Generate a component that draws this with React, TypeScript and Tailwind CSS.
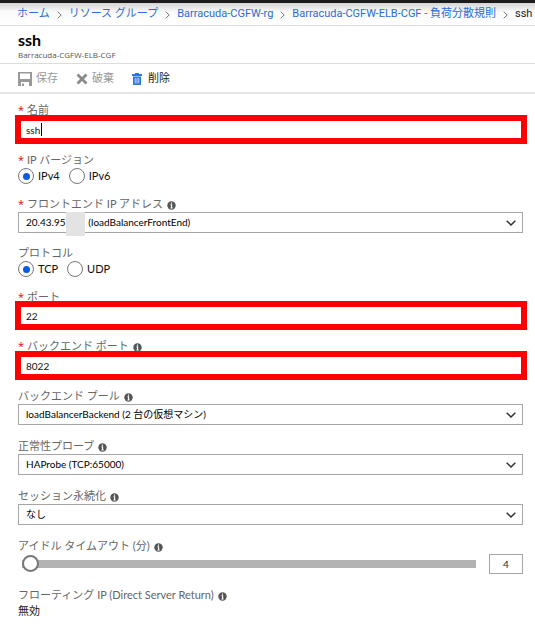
import { Fragment, useState } from "react";
import type { ReactNode } from "react";

const crumbs = ["ホーム", "リソース グループ", "Barracuda-CGFW-rg", "Barracuda-CGFW-ELB-CGF - 負荷分散規則"];

function InfoIcon() {
  return (
    <svg viewBox="0 0 9 9" className="mt-[3px] ml-1 size-[9px] shrink-0" aria-hidden="true">
      <circle cx="4.5" cy="4.5" r="4.2" fill="#555" />
      <path d="M4.5 1.4v1.300M3.500 3.900h1.100v2.900M3.400 7h2.300" stroke="#fff" strokeWidth="1.100" fill="none" />
    </svg>
  );
}

type LabelProps = { htmlFor?: string; id?: string; required?: boolean; info?: boolean; children: ReactNode };

function Label({ htmlFor, id, required, info, children }: LabelProps) {
  return (
    <label htmlFor={htmlFor} id={id} className="flex h-4 items-center leading-4 whitespace-nowrap text-[#666]">
      {required && <span className="w-[9px] shrink-0 font-['Open_Sans'] text-[#e3000f]">*</span>}
      {children}
      {info && <InfoIcon />}
    </label>
  );
}

function MarkedInput({ id, value }: { id: string; value: string }) {
  const [text, setText] = useState(value);
  return (
    <input
      id={id}
      value={text}
      onChange={(e) => setText(e.target.value)}
      className="block h-[29px] w-full border-[6px] border-[#ff0000] bg-white px-[5px] text-[10px] text-[#111] outline-none"
    />
  );
}

function Dropdown({ id, value }: { id: string; value: string }) {
  return (
    <div className="relative">
      <select id={id} className="block h-[21px] w-full appearance-none border border-[#a6a6a6] bg-white pr-6 pl-[7px] text-[10px] text-black outline-none">
        <option>{value}</option>
      </select>
      <svg viewBox="0 0 10 6" className="pointer-events-none absolute top-[8px] right-[7px] h-[6px] w-[10px]" aria-hidden="true">
        <path d="M.7.7 5 5 9.3.7" fill="none" stroke="#333" strokeWidth="1.5" />
      </svg>
    </div>
  );
}

function RadioRow({ name, options, labelledBy }: { name: string; options: string[]; labelledBy: string }) {
  return (
    <div role="radiogroup" aria-labelledby={labelledBy} className="flex h-4 items-center gap-[9px] text-[#111]">
      {options.map((option, i) => (
        <label key={option} className="flex items-center gap-1">
          <input
            type="radio"
            name={name}
            defaultChecked={i === 0}
            className="grid size-4 appearance-none place-items-center rounded-full border border-[#777] bg-white checked:before:size-[7px] checked:before:rounded-full checked:before:bg-[#0a5be0]"
          />
          {option}
        </label>
      ))}
    </div>
  );
}

export default function App() {
  const [timeout, setTimeoutValue] = useState("4");

  return (
    <div className="min-h-screen bg-white font-['Lato','Noto_Sans_CJK_JP',sans-serif] text-[11px]">
      <div className="h-[3px] bg-[#1c1c1c]" />
      <nav className="flex h-[23px] items-center gap-[7px] overflow-hidden border-b border-[#dcdcdc] bg-gradient-to-b from-[#d4d4d4] via-[#fafafa] via-40% to-white pt-px pl-[17px] font-['Roboto','Noto_Sans_CJK_JP',sans-serif] whitespace-nowrap">
        {crumbs.map((crumb) => (
          <Fragment key={crumb}>
            <a href="#" className="text-[#2b6bd6]">{crumb}</a>
            <svg viewBox="0 0 5 8" className="h-2 w-[5px] shrink-0" aria-hidden="true">
              <path d="M.7.7 4.2 4 .7 7.3" fill="none" stroke="#777" strokeWidth="1" />
            </svg>
          </Fragment>
        ))}
        <span className="text-[#222]">ssh</span>
      </nav>

      <header className="h-[38px] border-b border-[#dcdcdc] pt-1 pl-[18px]">
        <h1 className="text-[16px] leading-[20px] font-bold text-black">ssh</h1>
        <p className="font-['Open_Sans'] text-[8px] leading-[10px] text-[#555]">Barracuda-CGFW-ELB-CGF</p>
      </header>

      <div className="flex h-[30px] items-center gap-[18px] border-b-2 border-[#e6e6e6] pt-px pl-[18px] text-[#999]">
        <button type="button" className="flex items-center gap-1">
          <svg viewBox="0 0 14 14" className="size-[14px]" aria-hidden="true">
            <path d="M0 0h14v14h-3v-4H3v4H0zM2 1.500v5.500h10V1.500zM4 11.500h2V14H4z" fill="#999" fillRule="evenodd" />
          </svg>
          保存
        </button>
        <button type="button" className="flex items-center gap-1">
          <svg viewBox="0 0 12 12" className="size-[12px]" aria-hidden="true">
            <path d="m1.500 1.500 9 9m0-9-9 9" stroke="#8a8a8a" strokeWidth="2.800" />
          </svg>
          破棄
        </button>
        <button type="button" className="flex items-center gap-[6px] text-[#222]">
          <svg viewBox="0 0 10 12" className="h-3 w-[10px]" aria-hidden="true">
            <path d="M3 0h4v1h3v2H0V1h3zM1 3.500h8V12H1z" fill="#2b75dc" />
            <path d="M3.200 5v5.500M5 5v5.500M6.800 5v5.500" stroke="#fff" strokeWidth=".7" />
          </svg>
          削除
        </button>
      </div>

      <form className="pt-2 pb-1">
        <div className="pl-[18px]">
          <Label htmlFor="name" required>名前</Label>
        </div>
        <div className="relative -mt-[3px] mr-2 ml-[15px]">
          <MarkedInput id="name" value="ssh" />
          <span className="pointer-events-none absolute top-2 left-[26px] h-[13px] w-px bg-black" />
        </div>

        <div className="mt-2 mr-3 ml-[18px]">
          <Label id="version" required>IP バージョン</Label>
          <RadioRow name="version" options={["IPv4", "IPv6"]} labelledBy="version" />

          <div className="relative mt-3">
            <Label htmlFor="frontend" required info>フロントエンド IP アドレス</Label>
            <Dropdown id="frontend" value={"20.43.95.\u00a0\u00a0\u00a0\u00a0\u00a0\u00a0\u00a0\u00a0(loadBalancerFrontEnd)"} />
            <span className="pointer-events-none absolute top-4 left-12 h-6 w-[19px] bg-[#e3e3e3]" />
          </div>

          <div className="mt-3">
            <Label id="protocol">プロトコル</Label>
            <RadioRow name="protocol" options={["TCP", "UDP"]} labelledBy="protocol" />
          </div>

          <div className="mt-3">
            <Label htmlFor="port" required>ポート</Label>
          </div>
        </div>
        <div className="-mt-1 mr-2 ml-[15px]">
          <MarkedInput id="port" value="22" />
        </div>

        <div className="mt-2 ml-[18px]">
          <Label htmlFor="backend-port" required info>バックエンド ポート</Label>
        </div>
        <div className="-mt-[3px] mr-2 ml-[15px]">
          <MarkedInput id="backend-port" value="8022" />
        </div>

        <div className="mt-2 mr-3 ml-[18px] flex flex-col gap-[13px]">
          <div>
            <Label htmlFor="pool" info>バックエンド プール</Label>
            <Dropdown id="pool" value="loadBalancerBackend (2 台の仮想マシン)" />
          </div>
          <div>
            <Label htmlFor="probe" info>正常性プローブ</Label>
            <Dropdown id="probe" value="HAProbe (TCP:65000)" />
          </div>
          <div>
            <Label htmlFor="session" info>セッション永続化</Label>
            <Dropdown id="session" value="なし" />
          </div>
          <div>
            <Label htmlFor="idle" info>アイドル タイムアウト (分)</Label>
            <div className="flex items-center gap-[13px] pl-1">
              <input
                id="idle"
                type="range"
                min="4"
                max="30"
                value={timeout}
                onChange={(e) => setTimeoutValue(e.target.value)}
                className="h-5 min-w-0 flex-1 appearance-none bg-transparent [&::-webkit-slider-runnable-track]:h-2 [&::-webkit-slider-runnable-track]:bg-[#b3b3b3] [&::-webkit-slider-thumb]:-mt-[5px] [&::-webkit-slider-thumb]:size-[17px] [&::-webkit-slider-thumb]:appearance-none [&::-webkit-slider-thumb]:rounded-full [&::-webkit-slider-thumb]:border-2 [&::-webkit-slider-thumb]:border-[#777] [&::-webkit-slider-thumb]:bg-white"
              />
              <input
                aria-label="アイドル タイムアウト (分)"
                value={timeout}
                onChange={(e) => setTimeoutValue(e.target.value)}
                className="h-5 w-[34px] border border-[#a6a6a6] text-center text-[10px] text-[#222] outline-none"
              />
            </div>
          </div>
          <div>
            <Label info>フローティング IP (Direct Server Return)</Label>
            <p className="leading-4 text-[#222]">無効</p>
          </div>
        </div>
      </form>
    </div>
  );
}
